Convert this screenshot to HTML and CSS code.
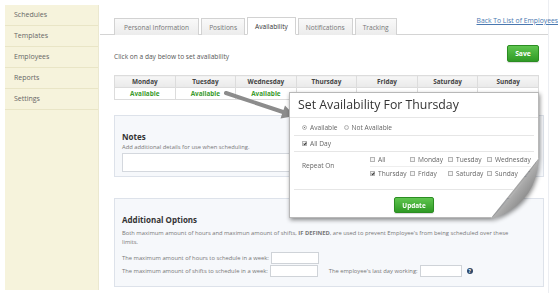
FILE: index.html
```html
<!DOCTYPE html>
<html lang="en">
  <head>
    <title>Employee availability</title>
    <link rel="stylesheet" href="styles.css">
  </head>
  <body>
    <div class="layout">
      <nav class="sidebar">
        <a href="#">Schedules</a>
        <a href="#">Templates</a>
        <a href="#">Employees</a>
        <a href="#">Reports</a>
        <a href="#">Settings</a>
      </nav>

      <div class="main">
        <div class="tabbar">
          <div class="tab">Personal Information</div>
          <div class="tab">Positions</div>
          <div class="tab active">Availability</div>
          <div class="tab">Notifications</div>
          <div class="tab">Tracking</div>
          <a class="back-link" href="#">Back To List of Employees</a>
        </div>

        <div class="content">
          <div class="toolbar">
            <span class="hint">Click on a day below to set availability</span>
            <button class="btn-green save">Save</button>
          </div>

          <table class="week">
            <tr>
              <th>Monday</th><th>Tuesday</th><th>Wednesday</th><th>Thursday</th>
              <th>Friday</th><th>Saturday</th><th>Sunday</th>
            </tr>
            <tr>
              <td>Available</td><td>Available</td><td>Available</td><td class="covered">Available</td>
              <td class="covered">Available</td><td class="covered">Available</td><td class="covered">Available</td>
            </tr>
          </table>

          <div class="box notes">
            <h4>Notes</h4>
            <p>Add additional details for use when scheduling.</p>
            <div class="textarea"></div>
          </div>

          <div class="box options">
            <h4>Additional Options</h4>
            <p>Both maximum amount of hours and maximun amount of shifts, <b>IF DEFINED</b>, are used to prevent Employee's from being scheduled over these<br>limits.</p>
            <div class="field-row">
              <span>The maximum amount of hours to schedule in a week:</span>
              <span class="input"></span>
            </div>
            <div class="field-row">
              <span>The maximum amount of shifts to schedule in a week:</span>
              <span class="input"></span>
              <span class="last-day">The employee's last day working:</span>
              <span class="input short"></span>
              <span class="help">?</span>
            </div>
          </div>
        </div>

        <svg class="arrow" width="80" height="32" viewBox="125 90 80 32">
          <line x1="127" y1="93" x2="184" y2="112" stroke="#8c8c8c" stroke-width="4" stroke-linecap="round"/>
          <polygon points="196,116 181.5,118.5 186,105.5" fill="#8c8c8c"/>
        </svg>

        <div class="popup">
          <div class="card">
            <div class="card-title">Set Availability For Thursday</div>
            <div class="card-row">
              <span class="radio on"></span> Available
              <span class="radio gap"></span> Not Available
            </div>
            <div class="card-row">
              <span class="check on"></span> All Day
            </div>
            <div class="card-row repeat">
              <span class="repeat-label">Repeat On</span>
              <div class="days">
                <span><i class="check"></i> All</span>
                <span><i class="check"></i> Monday</span>
                <span><i class="check"></i> Tuesday</span>
                <span><i class="check"></i> Wednesday</span>
                <span class="second"><i class="check on"></i> Thursday</span>
                <span class="second"><i class="check"></i> Friday</span>
                <span class="second"><i class="check"></i> Saturday</span>
                <span class="second"><i class="check"></i> Sunday</span>
              </div>
            </div>
            <div class="card-actions">
              <button class="btn-green update">Update</button>
            </div>
          </div>
          <svg class="curl" width="62" height="70" viewBox="0 0 62 70">
            <defs>
              <linearGradient id="flap" x1="0.2" y1="0.2" x2="0.9" y2="0.9">
                <stop offset="0" stop-color="#f2f2f2"/>
                <stop offset="0.5" stop-color="#a8a8a8"/>
                <stop offset="1" stop-color="#666"/>
              </linearGradient>
            </defs>
            <path d="M60 6 Q57 53 12 67 Q40 38 60 6 Z" fill="url(#flap)"/>
          </svg>
        </div>
      </div>
    </div>
  </body>
</html>
```

FILE: styles.css
```css
:root {
  --cream: #f6f3dc;
  --cream-line: #e9e5c6;
  --text: #555;
  --border: #d6d6d6;
  --box-bg: #f6f8fb;
  --box-border: #dde2ea;
  --green: #3a9b2c;
}

body {
  margin: 0;
  background: #fff;
  font-family: "Open Sans", sans-serif;
  color: var(--text);
}

.layout {
  display: flex;
  height: 293px;
}

.sidebar {
  width: 93px;
  margin: 5px 0 3px 5px;
  background: var(--cream);
  border-right: 1px solid #ebe8d0;
  display: flex;
  flex-direction: column;
}

.sidebar a {
  height: 20px;
  line-height: 20px;
  padding-left: 9px;
  font-size: 7px;
  color: #666;
  text-decoration: none;
  border-bottom: 1px solid var(--cream-line);
}

.main {
  position: relative;
  width: 449px;
  border-right: 1px solid #eceef2;
}

.tabbar {
  display: flex;
  align-items: flex-end;
  gap: 2px;
  height: 35px;
  margin-left: 1px;
  padding-left: 14px;
  border-bottom: 1px solid #d4d4d4;
  box-sizing: border-box;
}

.tab {
  height: 17px;
  line-height: 17px;
  padding: 0 7px;
  font-size: 6.6px;
  color: #777;
  background: linear-gradient(#f9f9f9, #ececec);
  border: 1px solid #d2d2d2;
  border-bottom: none;
  margin-bottom: -1px;
  box-sizing: border-box;
}

.tab:first-child {
  padding: 0 9px;
}

.tab.active {
  background: #fff;
  color: #333;
  height: 18px;
  border-bottom: 1px solid #fff;
}

.back-link {
  margin-left: auto;
  align-self: flex-start;
  margin-top: 16px;
  margin-right: -10px;
  font-size: 6.8px;
  color: #4a78b0;
}

.content {
  padding: 0 5px 0 15px;
}

.toolbar {
  display: flex;
  justify-content: space-between;
  align-items: flex-end;
  width: 425px;
  margin-top: 10px;
}

.hint {
  font-size: 6.6px;
  line-height: 10px;
  color: #555;
}

.btn-green {
  font-family: "Open Sans", sans-serif;
  font-weight: bold;
  color: #fff;
  background: linear-gradient(#5fc54f, #2f9a25);
  border: 1px solid #2b8d22;
  border-radius: 2px;
  padding: 0;
  box-shadow: 0 1px 1px rgba(0, 0, 0, 0.15);
}

.save {
  width: 32px;
  height: 17px;
  font-size: 6.8px;
}

.week {
  width: 425px;
  margin-top: 13px;
  border-collapse: collapse;
  table-layout: fixed;
  font-size: 6.4px;
  text-align: center;
}

.week th, .week td {
  border: 1px solid #dcdcdc;
  font-weight: bold;
  height: 11px;
  padding: 0;
}

.week th {
  color: #444;
  background: linear-gradient(#f6f6f6, #e9e9e9);
}

.week td {
  color: var(--green);
}

.week td.covered {
  color: transparent;
}

.box {
  width: 430px;
  background: var(--box-bg);
  border: 1px solid var(--box-border);
  box-sizing: border-box;
  padding: 0 7px;
}

.box h4 {
  margin: 0;
  font-size: 8px;
  color: #333;
  line-height: 12px;
}

.box p {
  margin: 0;
  font-size: 5.8px;
  line-height: 9px;
  color: #777;
}

.notes {
  margin-top: 15px;
  height: 62px;
  padding-top: 15px;
}

.textarea {
  height: 19px;
  margin-top: 1px;
  background: #fff;
  border: 1px solid #d4d8de;
  box-sizing: border-box;
}

.options {
  margin-top: 21px;
  height: 89px;
  padding-top: 15px;
}

.options h4 {
  margin-bottom: 3px;
}

.options p {
  margin-bottom: 5px;
}

.field-row {
  display: flex;
  align-items: center;
  height: 12px;
  margin-bottom: 1px;
  font-size: 5.8px;
  color: #777;
}

.input {
  width: 48px;
  height: 12px;
  margin-left: 2px;
  background: #fff;
  border: 1px solid #cfd3d8;
  box-sizing: border-box;
}

.input.short {
  width: 42px;
}

.last-day {
  margin-left: 11px;
}

.help {
  width: 6px;
  height: 6px;
  margin-left: 5px;
  border-radius: 50%;
  background: #2d496b;
  color: #fff;
  font-size: 5px;
  font-weight: bold;
  line-height: 6px;
  text-align: center;
}

.arrow {
  position: absolute;
  left: 125px;
  top: 90px;
}

.popup {
  position: absolute;
  left: 190px;
  top: 92px;
  width: 250px;
  height: 126px;
  filter: drop-shadow(1px 2px 2px rgba(0, 0, 0, 0.45));
}

.card {
  height: 100%;
  background: #fff;
  border: 1px solid #b8b8b8;
  box-sizing: border-box;
  clip-path: polygon(0 0, 100% 0, 100% 66px, 202px 100%, 0 100%);
  font-size: 6.6px;
  color: #666;
}

.card-title {
  height: 24px;
  line-height: 24px;
  padding-left: 8px;
  font-size: 12.3px;
  color: #333;
  border-bottom: 1px solid #e6e6e6;
  margin-bottom: 1px;
}

.card-row {
  display: flex;
  align-items: center;
  height: 15px;
  margin: 0 4px;
  padding-left: 8px;
  border-bottom: 1px solid #e6e6e6;
  gap: 3px;
}

.card-row:nth-child(2) {
  height: 16px;
}

.card-row.repeat {
  height: 37px;
  align-items: flex-start;
  gap: 0;
}

.repeat-label {
  width: 68px;
  line-height: 28px;
}

.days {
  display: grid;
  grid-template-columns: 40px 38px 39px auto;
}

.days span {
  display: flex;
  align-items: center;
  gap: 3px;
  height: 14px;
  white-space: nowrap;
}

.days .second {
  border-top: 1px solid #eeeeee;
  height: 13px;
}

.radio, .check {
  display: inline-block;
  width: 5px;
  height: 5px;
  border: 1px solid #b5b5b5;
  background: #f4f4f4;
  box-sizing: border-box;
  position: relative;
}

.radio {
  border-radius: 50%;
}

.radio.gap {
  margin-left: 3px;
}

.radio.on::after {
  content: "";
  position: absolute;
  left: 1px;
  top: 1px;
  width: 1px;
  height: 1px;
  background: #444;
  border-radius: 50%;
}

.check.on::after {
  content: "";
  position: absolute;
  left: 1px;
  top: 0;
  width: 1px;
  height: 2px;
  border: solid #333;
  border-width: 0 1px 1px 0;
  transform: rotate(40deg);
}

.card-actions {
  display: flex;
  justify-content: center;
  padding-top: 7px;
}

.update {
  width: 40px;
  height: 16px;
  font-size: 6.4px;
}

.curl {
  position: absolute;
  left: 190px;
  top: 60px;
}
```
